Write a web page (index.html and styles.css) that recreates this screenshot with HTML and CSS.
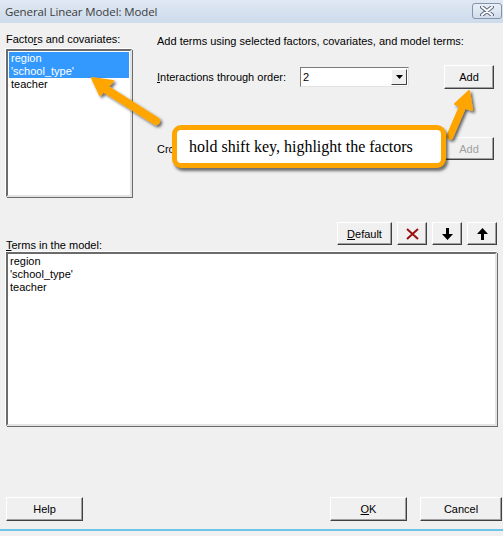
FILE: index.html
```html
<!DOCTYPE html>
<html lang="en">

<head>
  <meta charset="UTF-8">
  <title>General Linear Model: Model</title>
  <link rel="stylesheet" href="styles.css">
</head>

<body>
  <div class="window">
    <div class="titlebar">
      <span class="title">General Linear Model: Model</span>
      <button class="close" aria-label="Close">
        <svg width="14" height="10" viewBox="0 0 14 10">
          <path d="M2 1 L12 9 M12 1 L2 9" stroke="#5d6b80" stroke-width="4" stroke-linecap="round" />
          <path d="M2 1 L12 9 M12 1 L2 9" stroke="#fff" stroke-width="2" stroke-linecap="round" />
        </svg>
      </button>
    </div>

    <div class="content">
      <div class="top">
        <div class="factors">
          <div class="label">Facto<u>r</u>s and covariates:</div>
          <div class="listbox small">
            <div class="item selected">region</div>
            <div class="item selected">'school_type'</div>
            <div class="item">teacher</div>
          </div>
        </div>

        <div class="terms-add">
          <div class="label">Add terms using selected factors, covariates, and model terms:</div>
          <div class="row order-row">
            <span class="row-label"><u>I</u>nteractions through order:</span>
            <div class="combo">
              <span class="combo-value">2</span>
              <span class="combo-btn">
                <svg width="7" height="4" viewBox="0 0 7 4"><path d="M0 0 H7 L3.5 4 Z" fill="#000" /></svg>
              </span>
            </div>
            <button class="btn add">Add</button>
          </div>
          <div class="row cross-row">
            <span class="row-label">Cross predictors and terms in the model</span>
            <button class="btn add" disabled>Add</button>
          </div>
        </div>
      </div>

      <div class="tools">
        <div class="label"><u>T</u>erms in the model:</div>
        <div class="tool-buttons">
          <button class="btn default"><u>D</u>efault</button>
          <button class="btn icon">
            <svg width="13" height="12" viewBox="0 0 13 12">
              <path d="M1 1 L12 11 M12 1 L1 11" stroke="#9b0f0f" stroke-width="2" />
            </svg>
          </button>
          <button class="btn icon">
            <svg width="11" height="12" viewBox="0 0 11 12">
              <path d="M7 0 H4 V6 H0 L5.5 12 L11 6 H7 Z" fill="#000" />
            </svg>
          </button>
          <button class="btn icon">
            <svg width="11" height="12" viewBox="0 0 11 12">
              <path d="M4 12 H7 V6 H11 L5.5 0 L0 6 H4 Z" fill="#000" />
            </svg>
          </button>
        </div>
      </div>

      <div class="listbox large">
        <div class="item">region</div>
        <div class="item">'school_type'</div>
        <div class="item">teacher</div>
      </div>

      <div class="footer">
        <button class="btn wide">Help</button>
        <div class="footer-right">
          <button class="btn wide"><u>O</u>K</button>
          <button class="btn wide cancel">Cancel</button>
        </div>
      </div>
    </div>

    <div class="edge"></div>

    <!-- annotation drawn over the dialog -->
    <svg class="arrows" width="503" height="536" viewBox="0 0 503 536">
      <defs>
        <filter id="shade" x="-20%" y="-20%" width="160%" height="160%">
          <feDropShadow dx="2" dy="2" stdDeviation="1.5" flood-color="#000" flood-opacity="0.6" />
        </filter>
      </defs>
      <g filter="url(#shade)" fill="#ffa500" stroke="#ffa500">
        <path d="M156 121 L104 88" stroke-width="8" stroke-linecap="round" fill="none" />
        <path d="M92 78 L113 81 L100 95 Z" stroke-width="2" stroke-linejoin="round" />
        <path d="M450 136 L462 108" stroke-width="7" stroke-linecap="round" fill="none" />
        <path d="M469 91 L472 110 L455 104 Z" stroke-width="2" stroke-linejoin="round" />
      </g>
    </svg>
    <div class="callout">hold shift key, highlight the factors</div>
  </div>
</body>

</html>
```

FILE: styles.css
```css
body {
  margin: 0;
  font-family: "Liberation Sans", Arial, sans-serif;
  font-size: 11px;
  color: #000;
}

.window {
  position: relative;
  width: 503px;
  height: 536px;
  background-color: #f0f0f0;
  overflow: hidden;
}

.titlebar {
  height: 23px;
  display: flex;
  align-items: center;
  justify-content: space-between;
  padding: 0 1px 0 5px;
  background: linear-gradient(#dfe8f3, #cedbeb);
  box-sizing: border-box;
}

.title {
  font-family: "Open Sans", sans-serif;
  font-size: 11.5px;
  color: #3c3c3c;
  letter-spacing: -0.1px;
}

.close {
  width: 30px;
  height: 16px;
  margin-top: -2px;
  padding: 0;
  display: flex;
  align-items: center;
  justify-content: center;
  border: 1px solid #8494ab;
  border-radius: 3px;
  background: linear-gradient(#e9eff7, #d2ddea);
}

.content {
  padding: 0 6px 0 6px;
}

.label {
  line-height: 13px;
  white-space: nowrap;
}

.top {
  display: flex;
  margin-top: 10px;
}

.factors {
  width: 126px;
  display: flex;
  flex-direction: column;
  gap: 3px;
}

.listbox {
  background-color: #fff;
  border: 2px solid;
  border-color: #6b6b6b #e3e3e3 #e3e3e3 #6b6b6b;
  box-shadow: 1px 1px 0 #6b6b6b, -1px -1px 0 #fff;
  box-sizing: border-box;
  padding: 1px 0;
}

.listbox.small {
  height: 148px;
  padding-left: 1px;
  padding-right: 1px;
}

.item {
  line-height: 13px;
  padding-left: 2px;
  white-space: nowrap;
}

.item.selected {
  background-color: #3399ff;
  color: #fff;
}

.terms-add {
  margin-left: 25px;
  flex: 1;
  padding-top: 2px;
}

.row {
  display: flex;
  align-items: center;
}

.order-row {
  margin-top: 17px;
  height: 23px;
}

.cross-row {
  margin-top: 48px;
  height: 25px;
}

.row-label {
  width: 143px;
  white-space: nowrap;
}

.cross-row .row-label {
  width: auto;
  flex: 1;
}

.combo {
  width: 109px;
  height: 20px;
  display: flex;
  align-items: center;
  justify-content: space-between;
  background-color: #fff;
  border: 1px solid;
  border-color: #7a7a7a #e3e3e3 #e3e3e3 #7a7a7a;
  box-sizing: border-box;
  padding: 1px;
}

.combo-value {
  padding-left: 1px;
}

.combo-btn {
  width: 16px;
  height: 16px;
  display: flex;
  align-items: center;
  justify-content: center;
  background-color: #f0f0f0;
  border: 1px solid;
  border-color: #fff #404040 #404040 #fff;
  box-sizing: border-box;
}

.btn {
  font-family: inherit;
  font-size: 11px;
  color: #000;
  height: 23px;
  padding: 0;
  background-color: #f0f0f0;
  border: 1px solid;
  border-color: #fff #404040 #404040 #fff;
  box-shadow: inset -1px -1px 0 #a0a0a0;
  display: flex;
  align-items: center;
  justify-content: center;
}

.btn:disabled {
  color: #a0a0a0;
}

.add {
  width: 50px;
  margin-left: auto;
  margin-right: 3px;
}

.order-row .add {
  height: 24px;
}

.tools {
  display: flex;
  align-items: flex-end;
  justify-content: space-between;
  margin-top: 25px;
}

.tool-buttons {
  display: flex;
  gap: 5px;
  margin-bottom: 7px;
}

.btn.default {
  width: 55px;
}

.btn.icon {
  width: 30px;
}

.listbox.large {
  height: 174px;
  margin-right: 0;
  padding-left: 1px;
}

.listbox.large .item {
  padding-left: 1px;
}

.footer {
  display: flex;
  justify-content: space-between;
  margin-top: 71px;
}

.footer-right {
  display: flex;
  gap: 13px;
  margin-right: -5px;
}

.btn.wide {
  width: 77px;
  height: 24px;
}

.btn.cancel {
  width: 82px;
}

.edge {
  position: absolute;
  left: 0;
  right: 0;
  top: 529px;
  height: 2px;
  background-color: #6cc6ea;
}

.arrows {
  position: absolute;
  left: 0;
  top: 0;
}

.callout {
  position: absolute;
  left: 172px;
  top: 125px;
  width: 274px;
  height: 43px;
  box-sizing: border-box;
  border: 5px solid #ffa500;
  border-radius: 9px;
  background-color: #fff;
  box-shadow: 2px 3px 3px rgba(0, 0, 0, 0.55);
  padding: 7px 0 0 12px;
  font-family: "Liberation Serif", serif;
  font-size: 16px;
  line-height: 20px;
  white-space: nowrap;
}
```
